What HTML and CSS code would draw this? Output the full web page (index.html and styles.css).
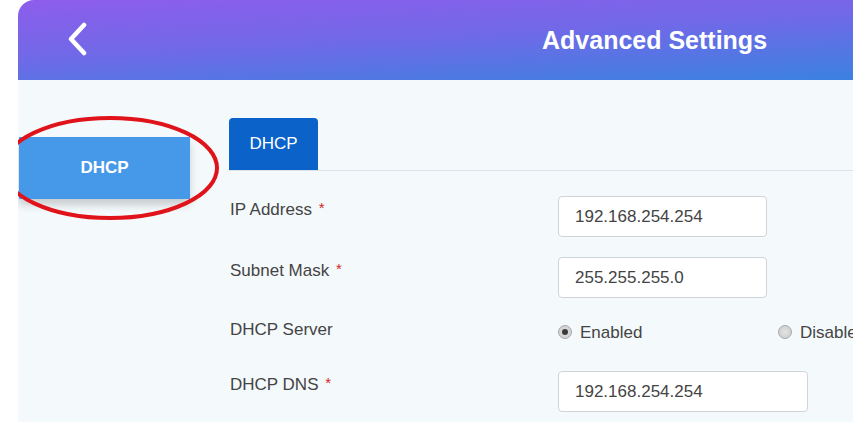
FILE: index.html
```html
<!DOCTYPE html>
<html lang="en">
<head>
    <meta charset="UTF-8">
    <title>Advanced Settings</title>
    <link rel="stylesheet" href="styles.css">
</head>
<body>
    <div class="app">
        <div class="header">
            <svg class="back" width="24" height="34" viewBox="0 0 24 34">
                <path d="M18 3 L5 17 L18 31" fill="none" stroke="#fff" stroke-width="4.5" stroke-linecap="round" stroke-linejoin="round"/>
            </svg>
            <h1>Advanced Settings</h1>
        </div>
        <div class="content">
            <div class="sidebar">
                <div class="side-tab">DHCP</div>
            </div>
            <div class="main">
                <div class="tabs">
                    <div class="tab active">DHCP</div>
                </div>
                <form class="form">
                    <div class="row">
                        <label>IP Address <span class="req">*</span></label>
                        <input type="text" value="192.168.254.254">
                    </div>
                    <div class="row">
                        <label>Subnet Mask <span class="req">*</span></label>
                        <input type="text" value="255.255.255.0">
                    </div>
                    <div class="row radio-row">
                        <label>DHCP Server</label>
                        <div class="radios">
                            <span class="radio-opt"><span class="radio checked"></span>Enabled</span>
                            <span class="radio-opt"><span class="radio"></span>Disabled</span>
                        </div>
                    </div>
                    <div class="row">
                        <label>DHCP DNS <span class="req">*</span></label>
                        <input type="text" class="wide" value="192.168.254.254">
                    </div>
                </form>
            </div>
        </div>
        <svg class="mark" width="224" height="110" viewBox="0 0 224 110">
            <ellipse cx="110" cy="54" rx="107" ry="50" fill="none" stroke="#e0131b" stroke-width="4"/>
        </svg>
    </div>
</body>
</html>
```
FILE: styles.css
```css
body {
    margin: 0;
    background: #fff;
    font-family: 'Liberation Sans', Arial, sans-serif;
    overflow: hidden;
}
.app {
    position: relative;
    margin-left: 18px;
    height: 422px;
    background: #f4f9fc;
    border-top-left-radius: 16px;
    overflow: hidden;
}
.header {
    height: 80px;
    display: flex;
    align-items: center;
    background: linear-gradient(177deg, #8d5deb 0%, #7268e8 45%, #3b82e0 100%);
}
.back {
    margin-left: 48px;
    margin-top: -2px;
}
.header h1 {
    margin: 0 0 0 452px;
    color: #fff;
    font-size: 25px;
    font-weight: bold;
}
.content {
    display: flex;
}
.sidebar {
    width: 211px;
    flex: none;
    padding-top: 57px;
}
.side-tab {
    margin-left: 1px;
    width: 171px;
    height: 62px;
    background: #4699e9;
    color: #fff;
    font-weight: bold;
    font-size: 17px;
    display: flex;
    align-items: center;
    justify-content: center;
    box-shadow: 0 6px 8px rgba(0, 0, 0, 0.18);
}
.main {
    flex: 1;
    padding-top: 38px;
}
.tabs {
    display: flex;
    border-bottom: 1px solid #dde3e8;
}
.tab {
    width: 89px;
    height: 52px;
    background: #0b62c8;
    color: #fff;
    font-size: 17px;
    display: flex;
    align-items: center;
    justify-content: center;
    border-radius: 4px 4px 0 0;
}
.form {
    padding-top: 25px;
}
.row {
    display: flex;
    align-items: flex-start;
    margin-bottom: 20px;
}
.row label {
    width: 329px;
    flex: none;
    padding-left: 1px;
    box-sizing: border-box;
    font-size: 17px;
    line-height: 24px;
    color: #444;
}
.req {
    color: #d0261c;
    font-size: 15px;
    margin-left: 2px;
    vertical-align: 2px;
}
.row input {
    width: 209px;
    height: 41px;
    box-sizing: border-box;
    border: 1px solid #cfd4d8;
    border-radius: 4px;
    background: #fff;
    padding: 0 16px;
    font-family: inherit;
    font-size: 17px;
    color: #444;
}
.row input.wide {
    width: 250px;
}
.radio-row {
    height: 33px;
}
.radios {
    display: flex;
    font-size: 17px;
    color: #444;
    line-height: 24px;
    padding-top: 3px;
}
.radio-opt {
    display: flex;
    align-items: center;
    width: 220px;
    flex: none;
}
.radio {
    width: 12px;
    height: 12px;
    border-radius: 50%;
    border: 1px solid #a9a9a9;
    background: radial-gradient(circle, #e4e4e4 0%, #c9c9c9 100%);
    margin-right: 8px;
    position: relative;
    top: -1px;
}
.radio.checked::after {
    content: "";
    position: absolute;
    left: 3px;
    top: 3px;
    width: 6px;
    height: 6px;
    border-radius: 50%;
    background: #3a3a3a;
}
.mark {
    position: absolute;
    left: -18px;
    top: 114px;
}
```
